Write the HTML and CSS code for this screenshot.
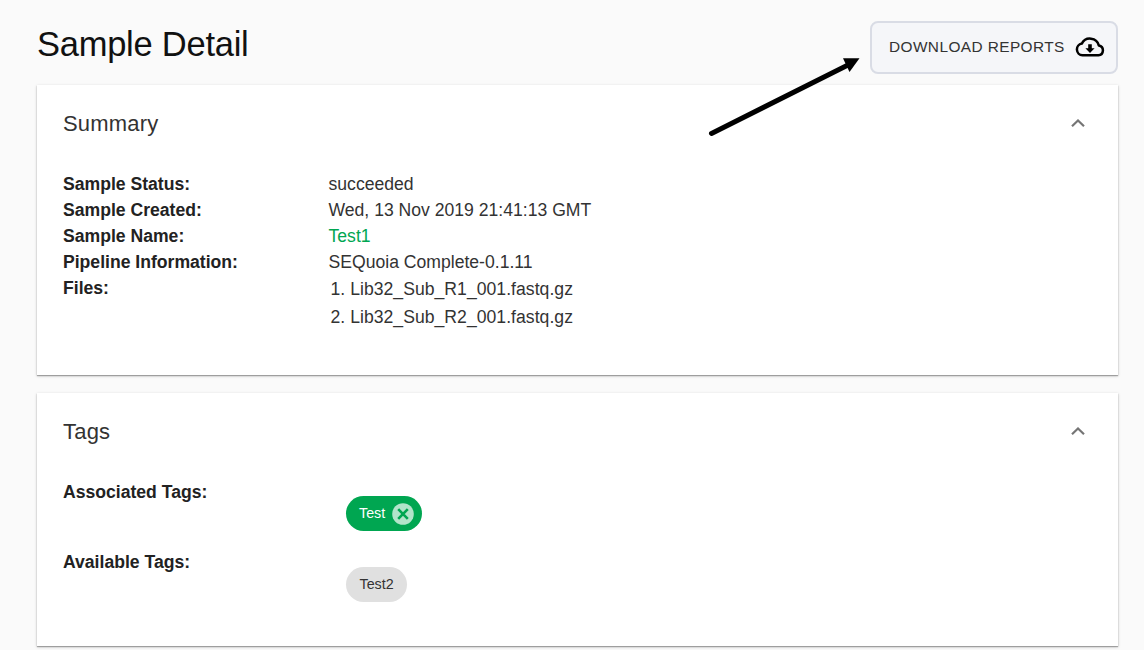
FILE: index.html
```html
<!DOCTYPE html>
<html lang="en">
<head>
<meta charset="utf-8">
<title>Sample Detail</title>
<link rel="stylesheet" href="styles.css">
</head>
<body>
<main class="page">
  <header class="page-head">
    <h1 class="title">Sample Detail</h1>
    <button class="download" type="button">
      <span class="download-label">DOWNLOAD REPORTS</span>
      <svg class="cloud" viewBox="0 0 30 20">
        <path d="M7.500 18.300H23.400a4.900 4.900 0 0 0 .5-9.700A9.200 9.200 0 0 0 6.800 6.600A5.900 5.900 0 0 0 7.500 18.300Z" fill="none" stroke="#000" stroke-width="2.500" stroke-linejoin="round"/>
        <path d="M13.200 7.300h3.600v4h2.800L15 15.900l-4.600-4.600h2.800z"/>
      </svg>
    </button>
  </header>

  <section class="card summary">
    <div class="card-head">
      <h2 class="card-title">Summary</h2>
      <svg class="chevron" viewBox="0 0 14 8"><path d="M1 7.200 7 1.500 13 7.200"/></svg>
    </div>
    <dl class="details">
      <dt>Sample Status:</dt><dd>succeeded</dd>
      <dt>Sample Created:</dt><dd>Wed, 13 Nov 2019 21:41:13 GMT</dd>
      <dt>Sample Name:</dt><dd><a class="sample-link">Test1</a></dd>
      <dt>Pipeline Information:</dt><dd>SEQuoia Complete-0.1.11</dd>
      <dt>Files:</dt>
      <dd class="files">
        <div>1. Lib32_Sub_R1_001.fastq.gz</div>
        <div>2. Lib32_Sub_R2_001.fastq.gz</div>
      </dd>
    </dl>
  </section>

  <section class="card tags">
    <div class="card-head">
      <h2 class="card-title">Tags</h2>
      <svg class="chevron" viewBox="0 0 14 8"><path d="M1 7.200 7 1.500 13 7.200"/></svg>
    </div>
    <div class="tag-row">
      <span class="tag-label">Associated Tags:</span>
      <span class="chip chip-active">Test
        <svg class="remove" viewBox="0 0 22 22"><circle cx="11" cy="11" r="10.800"/><path d="M6.200 6.200l9.600 9.600M15.800 6.200l-9.600 9.600"/></svg>
      </span>
    </div>
    <div class="tag-row">
      <span class="tag-label">Available Tags:</span>
      <span class="chip chip-available">Test2</span>
    </div>
  </section>
</main>

<svg class="pointer" viewBox="0 0 156 82">
  <path d="M5.500 77.500 142 9" stroke="#000" stroke-width="5" stroke-linecap="round"/>
  <path d="M137 2.300 153.500 2.300 143.500 16z"/>
</svg>
</body>
</html>
```

FILE: styles.css
```css
* { box-sizing: border-box; }

body {
  margin: 0;
  height: 650px;
  overflow: hidden;
  background: #fafafa;
  color: rgba(0, 0, 0, 0.87);
  font-family: "Liberation Sans", Arial, sans-serif;
}

.page { padding: 21px 26px 0 37px; }

.page-head {
  display: flex;
  justify-content: space-between;
  height: 64px;
}

.title {
  margin: 3px 0 0;
  font-size: 34.500px;
  font-weight: 400;
  line-height: 40px;
  letter-spacing: -0.250px;
  color: #111;
}

.download {
  display: flex;
  align-items: center;
  justify-content: space-between;
  width: 248px;
  height: 53px;
  padding: 0 11px 0 17px;
  border: 2px solid #d9dce5;
  border-radius: 8px;
  background: #f5f6f9;
  font-family: inherit;
  color: #333;
}

.download-label {
  padding-bottom: 2px;
  font-size: 15.400px;
  letter-spacing: 0.420px;
  white-space: nowrap;
}

.cloud {
  width: 30px;
  height: 20px;
  margin-bottom: 1px;
}

.card {
  background: #fff;
  box-shadow: 0 1px 1px rgba(0, 0, 0, 0.28), 0 1px 3px rgba(0, 0, 0, 0.2);
}

.summary { height: 290px; }
.tags { height: 253px; margin-top: 18px; }

.card-head {
  display: flex;
  align-items: center;
  justify-content: space-between;
  height: 77px;
  padding: 0 33px 0 26px;
}

.card-title {
  margin: 0;
  font-size: 22px;
  font-weight: 400;
  letter-spacing: 0.200px;
  color: #333;
}

.chevron {
  width: 14px;
  height: 8px;
  margin-bottom: 1.500px;
}

.chevron path {
  fill: none;
  stroke: #757575;
  stroke-width: 2.200;
}

.details {
  display: grid;
  grid-template-columns: 265.500px 1fr;
  grid-auto-rows: 26px;
  margin: 0;
  padding: 9px 26px 0;
  font-size: 17.600px;
  line-height: 26px;
  color: #333;
}

.details dt,
.tag-label {
  font-weight: 700;
  color: #222;
}

.details dd { margin: 0; }

.sample-link { color: #00a651; }

.details .files {
  padding: 0 0 0 2px;
  line-height: 28px;
  letter-spacing: 0.030px;
}

.tag-row {
  display: flex;
  align-items: flex-start;
  height: 70px;
  padding: 9px 26px 0;
}

.tag-label {
  width: 283px;
  font-size: 17.600px;
  line-height: 26px;
}

.chip {
  display: flex;
  align-items: center;
  gap: 7px;
  height: 35px;
  margin-top: 17px;
  padding: 0 13.500px;
  border-radius: 17.500px;
  background: #e0e0e0;
  font-size: 14.300px;
  color: #333;
}

.chip-active {
  width: 76px;
  padding: 0 8px 1px 13px;
  gap: 6.500px;
  background: #00a651;
  color: #fff;
}

.chip-available {
  margin-top: 18px;
  padding-bottom: 1px;
}

.remove {
  flex: none;
  width: 22px;
  height: 22px;
  margin-top: 1px;
}

.remove circle { fill: #b2e4ca; }

.remove path {
  stroke: #00a651;
  stroke-width: 2.600;
}

/* Callout arrow drawn over the page, aimed at the download button */
.pointer {
  position: absolute;
  left: 706px;
  top: 56px;
  width: 156px;
  height: 82px;
}
```
